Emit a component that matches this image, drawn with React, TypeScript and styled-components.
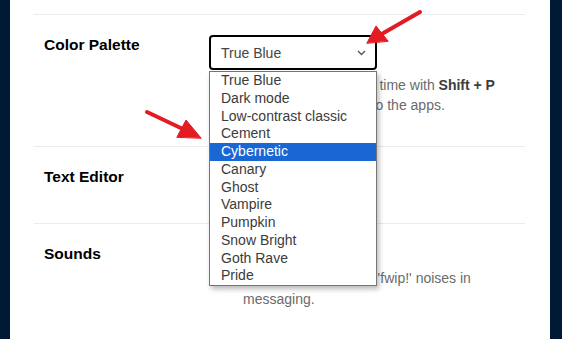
import styled, { createGlobalStyle } from 'styled-components';

const GlobalStyle = createGlobalStyle`
  html, body {
    margin: 0;
    padding: 0;
    background: #ffffff;
  }
  body {
    font-family: 'Liberation Sans', Arial, sans-serif;
  }
`;

const SPage = styled.div`
  position: relative;
  display: flex;
  height: 100vh;
  overflow: hidden;
`;

const SNavBar = styled.div<{ $width: number }>`
  flex: 0 0 ${(p) => p.$width}px;
  background: #001935;
`;

const SMain = styled.main`
  flex: 1;
  background: #ffffff;
  padding: 14px 25px 0 24px;
`;

const SRow = styled.section`
  display: grid;
  grid-template-columns: 165px 1fr;
  padding: 20px 10px 31px;
  border-top: 1px solid #ebebeb;
`;

const STitle = styled.h3`
  margin: 0;
  font-size: 15.5px;
  line-height: 19px;
  font-weight: 700;
  color: #000000;
`;

const SControl = styled.div`
  display: flex;
  flex-direction: column;
  align-items: flex-start;
`;

const SSelectWrap = styled.div`
  position: relative;
  width: 168px;
`;

const SSelect = styled.div`
  display: flex;
  align-items: center;
  justify-content: space-between;
  box-sizing: border-box;
  height: 35px;
  padding: 0 9px 0 10px;
  border: 2px solid #000000;
  border-radius: 4px;
  font-size: 14px;
  color: #444444;
`;

const SOptions = styled.ul`
  position: absolute;
  top: calc(100% + 1px);
  left: 0;
  z-index: 2;
  box-sizing: border-box;
  width: 168px;
  margin: 0;
  padding: 0;
  list-style: none;
  background: #ffffff;
  border: 1px solid #767676;
  box-shadow: 2px 3px 5px rgba(0, 0, 0, 0.28);
`;

const SOption = styled.li<{ $active?: boolean }>`
  padding-left: 11px;
  font-size: 14px;
  line-height: 17.75px;
  white-space: nowrap;
  color: ${(p) => (p.$active ? '#ffffff' : '#3b3b3b')};
  background: ${(p) => (p.$active ? '#1967d2' : 'transparent')};
`;

const SDesc = styled.p<{ $indent?: number; $lh?: number; $gap?: number }>`
  margin: ${(p) => p.$gap ?? 5}px 0 0;
  padding-left: ${(p) => p.$indent ?? 0}px;
  font-size: 14px;
  line-height: ${(p) => p.$lh ?? 20}px;
  color: #6b6b6b;
  white-space: nowrap;
  b {
    color: #3d3d3d;
    font-weight: 700;
  }
`;

const SToggleLine = styled.div`
  display: flex;
  align-items: center;
  gap: 8px;
  height: 25px;
  font-size: 14px;
  color: #444444;
`;

const SToggle = styled.span`
  position: relative;
  width: 26px;
  height: 16px;
  border-radius: 8px;
  background: #00b8ff;
  &::after {
    content: '';
    position: absolute;
    top: 2px;
    right: 2px;
    width: 12px;
    height: 12px;
    border-radius: 50%;
    background: #ffffff;
  }
`;

const SAnnotations = styled.svg`
  position: absolute;
  inset: 0;
  width: 100%;
  height: 100%;
  pointer-events: none;
  z-index: 5;
`;

const palettes = [
  'True Blue',
  'Dark mode',
  'Low-contrast classic',
  'Cement',
  'Cybernetic',
  'Canary',
  'Ghost',
  'Vampire',
  'Pumpkin',
  'Snow Bright',
  'Goth Rave',
  'Pride',
];

const Chevron = () => (
  <svg width='9' height='6' viewBox='0 0 9 6'>
    <path d='M1 1l3.5 3.5L8 1' fill='none' stroke='#555' strokeWidth='1.4' />
  </svg>
);

const App = () => {
  return (
    <>
      <GlobalStyle />
      <SPage>
        <SNavBar $width={10} />
        <SMain>
          <SRow>
            <STitle>Color Palette</STitle>
            <SControl>
              <SSelectWrap>
                <SSelect>
                  <span>True Blue</span>
                  <Chevron />
                </SSelect>
                <SOptions>
                  {palettes.map((name) => (
                    <SOption key={name} $active={name === 'Cybernetic'}>
                      {name}
                    </SOption>
                  ))}
                </SOptions>
              </SSelectWrap>
              <SDesc>
                Cycle through these at any time with <b>Shift + P</b>
                <br />
                These palettes also apply to the apps.
              </SDesc>
            </SControl>
          </SRow>
          <SRow>
            <STitle>Text Editor</STitle>
            <SControl>
              <SToggleLine>
                <SToggle />
                Rich text
              </SToggleLine>
            </SControl>
          </SRow>
          <SRow>
            <STitle>Sounds</STitle>
            <SControl>
              <SToggleLine>
                <SToggle />
              </SToggleLine>
              <SDesc $indent={34} $lh={21} $gap={-1}>
                Hear those satisfying 'fwip!' noises in
                <br />
                messaging.
              </SDesc>
            </SControl>
          </SRow>
        </SMain>
        <SNavBar $width={12} />
        <SAnnotations viewBox='0 0 562 339'>
          <g fill='#e31b23' stroke='#e31b23' strokeLinecap='round'>
            <line x1='420' y1='12' x2='380' y2='35' strokeWidth='4' />
            <polygon points='367,43 376,26 388,41' strokeWidth='1' />
            <line x1='147' y1='112' x2='185' y2='130' strokeWidth='4' />
            <polygon points='201,138 186,120 177,137' strokeWidth='1' />
          </g>
        </SAnnotations>
      </SPage>
    </>
  );
};

export default App;
